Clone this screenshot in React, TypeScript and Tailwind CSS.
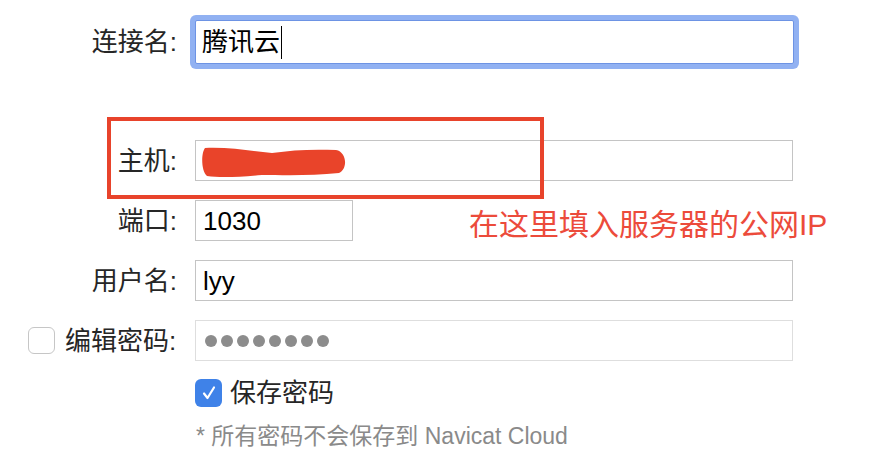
import React from "react";

const font = { fontFamily: '"Liberation Sans", "Noto Sans CJK SC", sans-serif' };

function Label({ children }: { children: React.ReactNode }) {
    return (
        <div className="w-[177px] shrink-0 flex items-center justify-end text-[26px] leading-none text-[#262626]">
            {children}
        </div>
    );
}

function Field({ value, width = "w-[598px]", h = "h-[41px]" }: { value?: string; width?: string; h?: string }) {
    return (
        <div className={`ml-[18px] ${width} ${h} border border-[#c4c4c4] bg-white flex items-center pl-[7px] text-[26px] leading-none text-black`}>
            {value}
        </div>
    );
}

export default function App() {
    return (
        <div style={font} className="relative w-[884px] h-[472px] bg-white overflow-hidden">
            {/* 连接名 (focused) */}
            <div className="flex items-center pt-[20px]">
                <Label>连接名:</Label>
                <div className="ml-[18px] w-[599px] h-[44px] rounded-[2px] border border-[#6d93e4] bg-white shadow-[0_0_0_5px_#91b1f2] flex items-center pl-[6px] text-[26px] leading-none text-black">
                    <span>腾讯云</span>
                    <span className="ml-[1px] w-[1px] h-[33px] bg-black" />
                </div>
            </div>

            {/* 主机 */}
            <div className="flex items-center mt-[76px]">
                <Label>主机:</Label>
                <div className="relative ml-[18px] w-[598px] h-[41px] border border-[#c4c4c4] bg-white">
                    <svg className="absolute left-[4px] top-[4px]" width="148" height="34" viewBox="0 0 148 34">
                        <path
                            d="M5 3 C30 2 50 6 72 8 C92 5 112 4 136 5 C147 7 148 24 139 28 C112 31 82 30 62 30 C40 32 20 33 7 31 C1 26 1 8 5 3 Z"
                            fill="#e9442a"
                        />
                    </svg>
                </div>
            </div>

            {/* 端口 */}
            <div className="flex items-center mt-[19px]">
                <Label>端口:</Label>
                <Field value="1030" width="w-[158px]" />
                <div className="ml-[116px] mt-[8px] text-[30px] leading-none text-[#ec4b3b]">在这里填入服务器的公网IP</div>
            </div>

            {/* 用户名 */}
            <div className="flex items-center mt-[19px]">
                <Label>用户名:</Label>
                <Field value="lyy" />
            </div>

            {/* 编辑密码 */}
            <div className="flex items-center mt-[19px]">
                <div className="w-[177px] shrink-0 flex items-center text-[26px] leading-none text-[#262626]">
                    <span className="ml-[28px] w-[27px] h-[27px] rounded-[6px] border border-[#c6c6c6] bg-white" />
                    <span className="ml-[10px]">编辑密码:</span>
                </div>
                <div className="ml-[18px] w-[598px] h-[41px] border border-[#dedede] bg-white flex items-center pl-[9px] gap-[4px]">
                    {Array.from({ length: 8 }).map((_, i) => (
                        <span key={i} className="w-[12px] h-[12px] rounded-full bg-[#8c8c8c]" />
                    ))}
                </div>
            </div>

            {/* 保存密码 */}
            <div className="flex items-center mt-[18px] ml-[195px]">
                <span className="w-[27px] h-[28px] rounded-[6px] bg-[#3f82e8] flex items-center justify-center">
                    <svg width="18" height="18" viewBox="0 0 18 18">
                        <path d="M4 9.5 L7.5 14 L14 3.5" fill="none" stroke="white" strokeWidth="2.2" strokeLinecap="round" strokeLinejoin="round" />
                    </svg>
                </span>
                <span className="ml-[8px] text-[26px] leading-none text-[#262626]">保存密码</span>
            </div>

            <div className="mt-[18px] ml-[196px] text-[23px] leading-none text-[#8a8a8a]">* 所有密码不会保存到 Navicat Cloud</div>

            {/* annotation box */}
            <div className="absolute left-[107px] top-[117px] w-[437px] h-[82px] border-[4px] border-[#e8432b]" />
        </div>
    );
}
